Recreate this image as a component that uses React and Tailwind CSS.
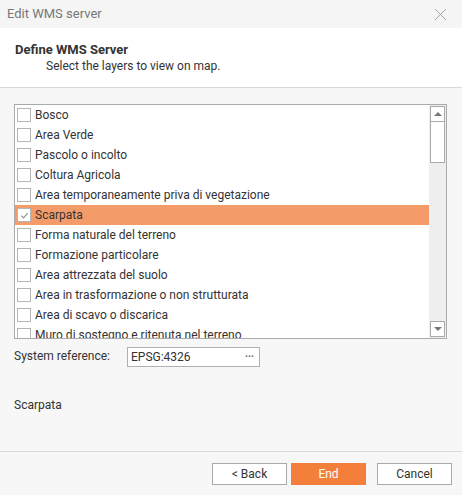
import { X } from "lucide-react";

const LAYERS = [
  "Bosco",
  "Area Verde",
  "Pascolo o incolto",
  "Coltura Agricola",
  "Area temporaneamente priva di vegetazione",
  "Scarpata",
  "Forma naturale del terreno",
  "Formazione particolare",
  "Area attrezzata del suolo",
  "Area in trasformazione o non strutturata",
  "Area di scavo o discarica",
  "Muro di sostegno e ritenuta nel terreno",
];

function Check({ checked }) {
  return (
    <span className="flex h-[14px] w-[14px] shrink-0 items-center justify-center border border-[#b5b5b5] bg-white">
      {checked && (
        <svg viewBox="0 0 10 10" className="h-[9px] w-[9px]">
          <path d="M1.5 5.2 L4 7.6 L8.6 2.2" fill="none" stroke="#8a8a8a" strokeWidth="1.2" />
        </svg>
      )}
    </span>
  );
}

export default function App() {
  return (
    <div
      className="flex h-[495px] w-[462px] flex-col bg-[#f7f7f7] text-[12px] text-[#333]"
      style={{ fontFamily: "Roboto, 'Liberation Sans', sans-serif" }}
    >
      {/* title bar */}
      <div className="flex h-[28px] shrink-0 items-center justify-between bg-[#f5f5f5] pl-[7px] pr-[11px]">
        <span className="text-[13px] text-[#777]">Edit WMS server</span>
        <X className="h-[21px] w-[21px] text-[#9a9a9a]" strokeWidth={1} />
      </div>

      {/* header */}
      <div className="h-[60px] shrink-0 border-b border-[#d9d9d9] bg-white pl-[15px] pt-[14px]">
        <div className="text-[13px] font-bold leading-[16px] text-[#333]">Define WMS Server</div>
        <div className="pl-[31px] leading-[17px] text-[#333]">Select the layers to view on map.</div>
      </div>

      {/* body */}
      <div className="flex flex-1 flex-col px-[14px] pt-[16px]">
        <div className="mr-px flex h-[235px] border border-[#aaa] bg-white">
          <div className="flex-1 overflow-hidden">
            {LAYERS.map((l) => {
              const sel = l === "Scarpata";
              return (
                <div
                  key={l}
                  className={`flex h-[20px] items-center gap-[4px] pl-[2px] ${sel ? "bg-[#f39c69]" : ""}`}
                >
                  <Check checked={sel} />
                  <span className="whitespace-nowrap leading-none">{l}</span>
                </div>
              );
            })}
          </div>
          <div className="flex w-[17px] shrink-0 flex-col bg-[#eee] px-px pt-px">
            <div className="flex h-[16px] items-center justify-center border border-[#aaa] bg-white">
              <span className="h-0 w-0 border-x-[4px] border-b-[4px] border-x-transparent border-b-[#777]" />
            </div>
            <div className="h-[41px] border-x border-b border-[#aaa] bg-white" />
            <div className="flex-1" />
            <div className="mb-px flex h-[16px] items-center justify-center border border-[#aaa] bg-white">
              <span className="h-0 w-0 border-x-[4px] border-t-[4px] border-x-transparent border-t-[#777]" />
            </div>
          </div>
        </div>

        <div className="mt-[8px] flex items-start">
          <span className="w-[113px] pt-[1px] leading-[16px]">System reference:</span>
          <div className="flex h-[20px] w-[133px] items-center justify-between border border-[#b0b0b0] bg-white pl-[3px] pr-[5px]">
            <span className="text-[#333]">EPSG:4326</span>
            <span className="text-[10px] font-bold leading-none text-[#666]">···</span>
          </div>
        </div>

        <div className="mt-[30px] leading-[16px]">Scarpata</div>
      </div>

      {/* footer */}
      <div className="flex h-[44px] shrink-0 items-start justify-end gap-[4px] border-t border-[#d9d9d9] pr-[10px] pt-[11px]">
        <button className="h-[22px] w-[75px] border border-[#aaa] bg-white text-[12px] text-[#333]">
          &lt; Back
        </button>
        <button className="h-[22px] w-[75px] bg-[#f47f3a] text-[12px] text-white">End</button>
        <button className="ml-[7px] h-[22px] w-[75px] border border-[#aaa] bg-white text-[12px] text-[#333]">
          Cancel
        </button>
      </div>
    </div>
  );
}
